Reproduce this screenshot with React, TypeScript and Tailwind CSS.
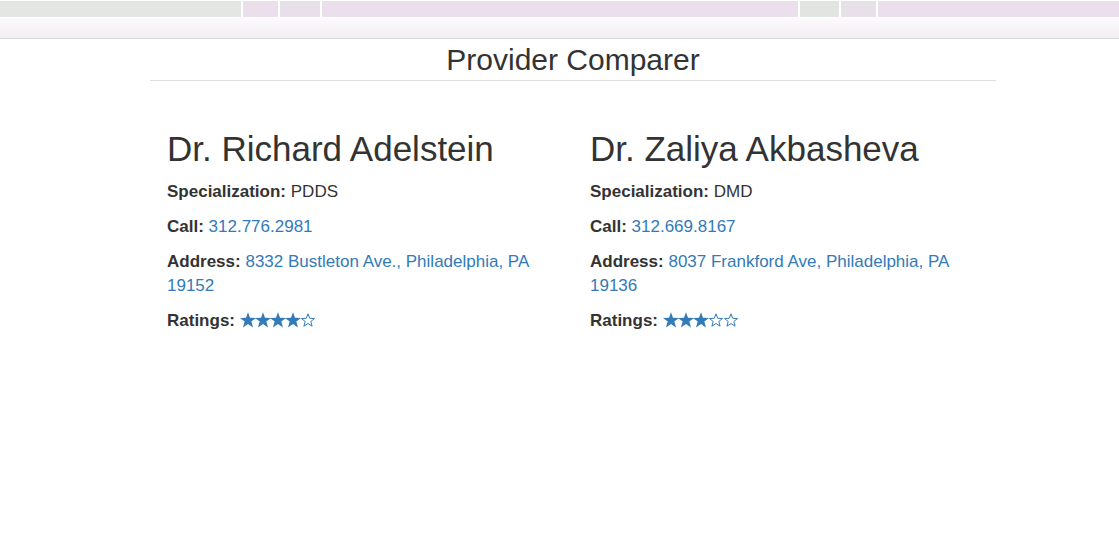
import React from 'react';

interface Provider {
  name: string;
  specialization: string;
  phone: string;
  address: string;
  rating: number;
}

const providers: Provider[] = [
  {
    name: 'Dr. Richard Adelstein',
    specialization: 'PDDS',
    phone: '312.776.2981',
    address: '8332 Bustleton Ave., Philadelphia, PA 19152',
    rating: 4,
  },
  {
    name: 'Dr. Zaliya Akbasheva',
    specialization: 'DMD',
    phone: '312.669.8167',
    address: '8037 Frankford Ave, Philadelphia, PA 19136',
    rating: 3,
  },
];

function TopBar() {
  return (
    <header className="border-b border-[#d9d9d9] pt-px">
      <div className="flex h-4 gap-0.5">
        <div className="w-[241px] bg-[#e3e6e2]" />
        <div className="w-[35px] bg-[#eadfea]" />
        <div className="w-10 bg-[#e8e0e8]" />
        <div className="flex-1 bg-[#ecdfec]" />
        <div className="w-[39px] bg-[#e0e6df]" />
        <div className="w-[35px] bg-[#e8e0e8]" />
        <div className="w-[241px] bg-[#ecdfec]" />
      </div>
      <div className="mt-px h-5 bg-linear-to-b from-[#fdfafd] to-[#f1edf1]" />
    </header>
  );
}

function Star({ filled }: { filled: boolean }) {
  return (
    <svg viewBox="0 0 16 16" className="-mr-px h-4 w-4" aria-hidden="true">
      {filled ? (
        <path
          d="M8 .3 10 5.8 16 6 11.3 9.6 13 15.4 8 12.1 3 15.4 4.7 9.6 0 6 6 5.8Z"
          fill="currentColor"
        />
      ) : (
        <path
          d="M8 1.8 9.7 6.3 14.5 6.5 10.8 9.5 12.1 14.2 8 11.5 3.9 14.2 5.2 9.5 1.5 6.5 6.3 6.3Z"
          fill="none"
          stroke="currentColor"
          strokeWidth="1"
        />
      )}
    </svg>
  );
}

function Stars({ rating }: { rating: number }) {
  return (
    <span
      role="img"
      aria-label={`${rating} out of 5 stars`}
      className="inline-flex align-[-2px] text-[#337ab7]"
    >
      {[1, 2, 3, 4, 5].map((n) => (
        <Star key={n} filled={n <= rating} />
      ))}
    </span>
  );
}

function ProviderCard({ provider }: { provider: Provider }) {
  return (
    <article className="flex flex-col gap-[11px] px-[17px]">
      <h1 className="text-[35px] leading-10">{provider.name}</h1>
      <p>
        <strong>Specialization:</strong> {provider.specialization}
      </p>
      <p>
        <strong>Call:</strong>{' '}
        <a href={`tel:${provider.phone}`} className="text-[#337ab7]">
          {provider.phone}
        </a>
      </p>
      <p>
        <strong>Address:</strong>{' '}
        <a href="#map" className="text-[#337ab7]">
          {provider.address}
        </a>
      </p>
      <p>
        <strong>Ratings:</strong> <Stars rating={provider.rating} />
      </p>
    </article>
  );
}

export default function App() {
  return (
    <div className="min-h-screen bg-white font-['Liberation_Sans',Arial,sans-serif] text-[17px] leading-6 text-[#333333]">
      <TopBar />
      <main className="pr-[123px] pl-[150px]">
        <h2 className="border-b border-[#dddddd] pt-1 pb-1 text-center text-[30px] leading-[33px]">
          Provider Comparer
        </h2>
        <div className="mt-12 grid grid-cols-2">
          {providers.map((provider) => (
            <ProviderCard key={provider.name} provider={provider} />
          ))}
        </div>
      </main>
    </div>
  );
}
